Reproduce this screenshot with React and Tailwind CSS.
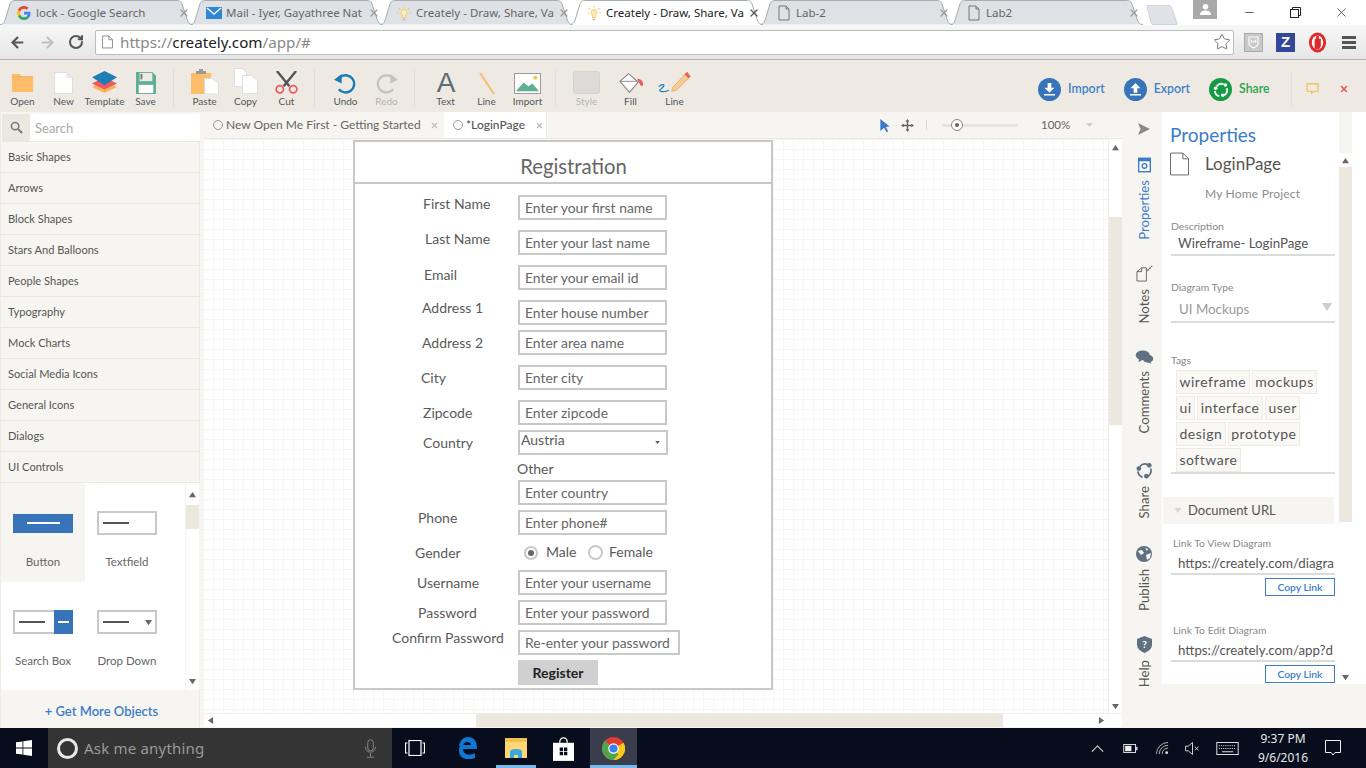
import React from 'react';
import { ArrowLeft, ArrowRight, RotateCw, Star, X, Minus } from 'lucide-react';

const chromeTabs = [
  { title: 'lock - Google Search', icon: 'google' },
  { title: 'Mail - Iyer, Gayathree Nat', icon: 'mail' },
  { title: 'Creately - Draw, Share, Va', icon: 'bulb' },
  { title: 'Creately - Draw, Share, Va', icon: 'bulb', active: true },
  { title: 'Lab-2', icon: 'doc' },
  { title: 'Lab2', icon: 'doc' },
];

const shapeGroups = ['Basic Shapes', 'Arrows', 'Block Shapes', 'Stars And Balloons', 'People Shapes', 'Typography', 'Mock Charts', 'Social Media Icons', 'General Icons', 'Dialogs', 'UI Controls'];

const formLabels = [
  { text: 'First Name', pos: 'left-[68px] top-[53px]' },
  { text: 'Last Name', pos: 'left-[70px] top-[88px]' },
  { text: 'Email', pos: 'left-[69px] top-[124px]' },
  { text: 'Address 1', pos: 'left-[67px] top-[157px]' },
  { text: 'Address 2', pos: 'left-[67px] top-[192px]' },
  { text: 'City', pos: 'left-[66px] top-[227px]' },
  { text: 'Zipcode', pos: 'left-[68px] top-[262px]' },
  { text: 'Country', pos: 'left-[68px] top-[292px]' },
  { text: 'Other', pos: 'left-[162px] top-[318px]' },
  { text: 'Phone', pos: 'left-[63px] top-[367px]' },
  { text: 'Gender', pos: 'left-[60px] top-[402px]' },
  { text: 'Male', pos: 'left-[191px] top-[401px]' },
  { text: 'Female', pos: 'left-[254px] top-[401px]' },
  { text: 'Username', pos: 'left-[62px] top-[432px]' },
  { text: 'Password', pos: 'left-[63px] top-[462px]' },
  { text: 'Confirm Password', pos: 'left-[37px] top-[487px]' },
];

const formInputs = [
  { text: 'Enter your first name', pos: 'top-[53px]' },
  { text: 'Enter your last name', pos: 'top-[88px]' },
  { text: 'Enter your email id', pos: 'top-[123px]' },
  { text: 'Enter house number', pos: 'top-[158px]' },
  { text: 'Enter area name', pos: 'top-[188px]' },
  { text: 'Enter city', pos: 'top-[223px]' },
  { text: 'Enter zipcode', pos: 'top-[258px]' },
  { text: 'Enter country', pos: 'top-[338px]' },
  { text: 'Enter phone#', pos: 'top-[368px]' },
  { text: 'Enter your username', pos: 'top-[428px]' },
  { text: 'Enter your password', pos: 'top-[458px]' },
];

const tagRows = [
  ['wireframe', 'mockups'],
  ['ui', 'interface', 'user'],
  ['design', 'prototype'],
  ['software'],
];

function TabIcon({ kind }) {
  if (kind === 'google') {
    return (
      <svg viewBox="0 0 16 16" className="w-4 h-4 shrink-0">
        <path d="M14.5 8.2c0-.5 0-1-.1-1.400H8v2.700h3.700c-.2.900-.7 1.600-1.400 2.100l2.200 1.700c1.300-1.200 2-3 2-5.100z" fill="#4285f4" />
        <path d="M8 15c1.900 0 3.500-.6 4.500-1.700l-2.200-1.700c-.6.400-1.400.7-2.300.7-1.800 0-3.300-1.200-3.800-2.800L1.900 11.200C3 13.500 5.300 15 8 15z" fill="#34a853" />
        <path d="M4.200 9.500c-.3-.9-.3-1.900 0-2.900L1.900 4.800c-1 1.900-1 4.400 0 6.400z" fill="#fbbc05" />
        <path d="M8 3.800c1 0 1.900.3 2.600 1l2-2C11.400 1.700 9.800 1 8 1 5.300 1 3 2.500 1.900 4.800l2.300 1.800C4.700 5 6.200 3.800 8 3.800z" fill="#ea4335" />
      </svg>
    );
  }
  if (kind === 'mail') {
    return (
      <svg viewBox="0 0 16 16" className="w-4 h-4 shrink-0">
        <rect y="2" width="16" height="12" fill="#2f86d6" />
        <path d="M1 3l7 6 7-6" fill="none" stroke="#fff" strokeWidth="1.400" />
      </svg>
    );
  }
  if (kind === 'bulb') {
    return (
      <svg viewBox="0 0 16 16" className="w-4 h-4 shrink-0" stroke="#f6cf6e" fill="none">
        <path d="M8 4.500a3 3 0 0 0-1.600 5.500v2.500h3.200V10A3 3 0 0 0 8 4.500z" fill="#fdeebb" />
        <path d="M8 .5v2M2.500 3l1.500 1.500M13.500 3L12 4.500M1 8h2M13 8h2" strokeWidth="1.200" />
        <path d="M6.800 14.500h2.400" stroke="#bbb" strokeWidth="1.500" />
      </svg>
    );
  }
  return (
    <svg viewBox="0 0 16 16" className="w-4 h-4 shrink-0" fill="none" stroke="#777">
      <path d="M3 1h7l3 3v11H3zM10 1v3h3" />
    </svg>
  );
}

function ChromeTab({ tab }) {
  return (
    <div className={`relative w-[193px] h-[25px] -mr-[3px] flex items-center pl-[16px] pr-[3px] ${tab.active ? 'z-10' : ''}`}>
      <svg viewBox="0 0 193 25" preserveAspectRatio="none" className="absolute inset-0 w-full h-full">
        <path
          d="M0 24.500C4 24.500 5 21 6 17L10 4C11 1.500 12 .5 16 .5H176C180 .5 181 1.500 182 4L187 19C188 22 189 24.500 193 24.500"
          fill={tab.active ? '#ffffff' : '#dee1e6'}
          stroke="#a9abae"
        />
      </svg>
      <div className="relative flex items-center w-full gap-[4px]">
        <TabIcon kind={tab.icon} />
        <span className={`flex-1 whitespace-nowrap text-[11.500px] leading-[16px] font-['Noto_Sans',sans-serif] ${tab.active ? 'text-[#222]' : 'text-[#666]'}`}>{tab.title}</span>
        <X size={12} strokeWidth={2.500} className={tab.active ? 'text-[#555] shrink-0' : 'text-[#9a9a9a] shrink-0'} />
      </div>
    </div>
  );
}

function ToolIcon({ kind }) {
  switch (kind) {
    case 'open':
      return <svg viewBox="0 0 26 22" preserveAspectRatio="none" className="w-[23px] h-[18px] mb-[2px]"><path d="M1 0h9l2 3h13v19H1z" fill="#fdbd6a" /><path d="M1 3h24v1H1z" fill="#f3a850" /></svg>;
    case 'new':
      return <svg viewBox="0 0 18 24" preserveAspectRatio="none" className="w-[19px] h-[22px]"><path d="M.5.5h11l6 6v17H.5z" fill="#fff" stroke="#ddd" /><path d="M11.500.5v6h6z" fill="#e9e9e9" /></svg>;
    case 'template':
      return (
        <svg viewBox="0 0 26 26" preserveAspectRatio="none" className="w-[25px] h-[23px]">
          <path d="M13 11L26 18 13 25 0 18z" fill="#f8b25c" />
          <path d="M13 7L26 14 13 21 0 14z" fill="#ed5a5e" />
          <path d="M13 0L26 7 13 16 0 7z" fill="#1d7eb5" />
        </svg>
      );
    case 'save':
      return (
        <svg viewBox="0 0 22 24" preserveAspectRatio="none" className="w-[20px] h-[22px]">
          <path d="M0 0h18l4 4v20H0z" fill="#5eb095" />
          <rect x="4" y="1" width="14" height="9" fill="#eeeae3" />
          <rect x="5" y="2" width="2" height="6" fill="#777" />
          <rect x="3" y="14" width="16" height="9" fill="#fff" />
        </svg>
      );
    case 'paste':
      return (
        <svg viewBox="0 0 28 25" preserveAspectRatio="none" className="w-[28px] h-[25px]">
          <path d="M0 4h20v21H0z" fill="#fdbd6a" />
          <path d="M5 2h10v3H5zM8 0h4v2H8z" fill="#9a9a9a" />
          <path d="M13.500 9.500h8l6 5v10.500h-14z" fill="#fff" stroke="#ddd" />
        </svg>
      );
    case 'copy':
      return (
        <svg viewBox="0 0 24 26" preserveAspectRatio="none" className="w-[24px] h-[26px]">
          <path d="M.5.5h8l4 4v14H.5z" fill="#fff" stroke="#ddd" />
          <path d="M8.500 7.500h9l6 5v13h-15z" fill="#fff" stroke="#ddd" />
        </svg>
      );
    case 'cut':
      return (
        <svg viewBox="0 0 26 24" className="w-[25px] h-[23px]" fill="none">
          <path d="M3 0l13 16M23 0L10 16" stroke="#555" strokeWidth="2.500" />
          <circle cx="6" cy="19" r="3.800" stroke="#ee5b5f" strokeWidth="1.800" />
          <circle cx="20" cy="19" r="3.800" stroke="#ee5b5f" strokeWidth="1.800" />
        </svg>
      );
    case 'undo':
      return (
        <svg viewBox="0 0 24 22" className="w-[23px] h-[21px]" fill="none">
          <path d="M7 4a9 9 0 1 1-2 13" stroke="#1c7cb6" strokeWidth="2.500" />
          <path d="M0 7l8-6v10z" fill="#1c7cb6" />
        </svg>
      );
    case 'redo':
      return (
        <svg viewBox="0 0 24 22" className="w-[23px] h-[21px]" fill="none">
          <path d="M17 4a9 9 0 1 0 2 13" stroke="#c4c4c0" strokeWidth="2.500" />
          <path d="M24 7l-8-6v10z" fill="#c4c4c0" />
        </svg>
      );
    case 'text':
      return (
        <svg viewBox="0 0 22 22" className="w-[22px] h-[22px]">
          <text x="11" y="20" textAnchor="middle" fontSize="28" fontFamily="'Liberation Sans', sans-serif" fill="#5f6b76">A</text>
        </svg>
      );
    case 'line':
      return <svg viewBox="0 0 16 21" className="w-[16px] h-[21px]"><path d="M1 0l14 21" stroke="#f7bb62" strokeWidth="1.800" /></svg>;
    case 'import':
      return (
        <svg viewBox="0 0 28 22" preserveAspectRatio="none" className="w-[27px] h-[21px]">
          <rect x=".5" y=".5" width="27" height="21" fill="#fff" stroke="#999" />
          <path d="M2 19l8-9 5 4 4-3 7 8z" fill="#5eb095" />
          <circle cx="22" cy="5" r="2.200" fill="#f8c24e" />
        </svg>
      );
    case 'style':
      return <div className="w-[27px] h-[23px] rounded-[3px] bg-[#dcdbd8] border border-[#d5d4d0]" />;
    case 'fill':
      return (
        <svg viewBox="0 0 28 26" preserveAspectRatio="none" className="w-[27px] h-[22px]" fill="none">
          <path d="M3 11L12 2l10 10-9 12z" stroke="#888" strokeWidth="1.200" fill="#fff" />
          <path d="M3 11h19" stroke="#888" />
          <path d="M21 8c4 0 6 3 6 7 0 2-2 2-3 0z" fill="#ef5a5d" />
        </svg>
      );
    default:
      return (
        <svg viewBox="0 0 36 26" className="w-[35px] h-[24px]" fill="none">
          <path d="M16 19L31 3l4 4-15 15-5 1z" fill="#f8cd93" stroke="#e7a968" />
          <path d="M29 5l4 4 2-2-3-5z" fill="#ef5a5d" />
          <path d="M1 18c3-3 7-3 5 0s-6 4-3 5 7 0 9-1" stroke="#1c7cb6" strokeWidth="1.300" />
        </svg>
      );
  }
}

function ToolButton({ kind, label, muted, width = 'w-[41px]' }) {
  return (
    <div className={`${width} flex flex-col items-center`}>
      <div className="h-[34px] flex items-end justify-center"><ToolIcon kind={kind} /></div>
      <span className={`text-[10px] leading-[14px] ${muted ? 'text-[#b5b5b2]' : 'text-[#555]'}`}>{label}</span>
    </div>
  );
}

function ToolSep() {
  return <div className="mx-[7px] w-px h-[38px] mt-[9px] bg-[#e4dfd6]" />;
}

function RoundAction({ bg, text, label, children }) {
  return (
    <div className="flex items-center gap-[7px]">
      <div className={`w-[23px] h-[23px] rounded-full flex items-center justify-center ${bg}`}>{children}</div>
      <span className={`text-[12.300px] font-semibold ${text}`}>{label}</span>
    </div>
  );
}

function ScrollArrow({ dir, className = '' }) {
  const d = { up: 'M4 1l4 6H0z', down: 'M4 7L0 1h8z', left: 'M1 4l6-4v8z', right: 'M7 4L1 0v8z' }[dir];
  return <svg viewBox="0 0 8 8" className={`w-[7px] h-[7px] ${className}`}><path d={d} fill="#666" /></svg>;
}

function ShapeCell({ label, active, children }) {
  return (
    <div className={`w-[84px] h-[99px] flex flex-col items-center ${active ? 'bg-[#f7f5f1]' : ''}`}>
      <div className="h-[28px] mt-[26px] flex items-center justify-center">{children}</div>
      <span className="mt-[18px] text-[11.500px] leading-[14px] text-[#666]">{label}</span>
    </div>
  );
}

function LeftPanel() {
  return (
    <div className="w-[204px] shrink-0 flex flex-col bg-[#f7f5f1] border-l border-[#efebe3]">
      <div className="h-[28px] mt-[2px] flex border-b border-[#ece8e0] mr-[4px]">
        <div className="w-[28px] ml-[1px] bg-[#ece8e0] flex items-center justify-center">
          <svg viewBox="0 0 14 14" className="w-[13px] h-[13px]" fill="none" stroke="#777" strokeWidth="1.600"><circle cx="5.500" cy="5.500" r="4" /><path d="M8.500 8.500l4.500 4.500" strokeWidth="2.200" /></svg>
        </div>
        <div className="flex-1 bg-white pl-[5px] text-[13px] leading-[29px] text-[#aaa]">Search</div>
      </div>
      <div className="mr-[4px] border-r border-[#ece8e0]">
        {shapeGroups.map((g) => (
          <div key={g} className="h-[31px] pl-[7px] border-b border-[#ece8e0] text-[11.100px] leading-[30px] text-[#555]">{g}</div>
        ))}
      </div>
      <div className="h-[207px] flex mr-[5px] bg-white">
        <div className="w-[184px] flex flex-wrap content-start">
          <ShapeCell label="Button" active>
            <div className="w-[60px] h-[19px] bg-[#3874b9] flex items-center justify-center"><div className="w-[33px] h-[2px] bg-white" /></div>
          </ShapeCell>
          <ShapeCell label="Textfield">
            <div className="w-[60px] h-[24px] border-2 border-[#c8c8c8] bg-white flex items-center pl-[4px]"><div className="w-[26px] h-[2px] bg-[#555]" /></div>
          </ShapeCell>
          <ShapeCell label="Search Box">
            <div className="w-[60px] h-[24px] border-2 border-r-0 border-[#c8c8c8] bg-white flex items-center pl-[4px]">
              <div className="w-[26px] h-[2px] bg-[#555]" />
              <div className="ml-auto w-[19px] h-[24px] bg-[#3874b9] flex items-center justify-center"><div className="w-[11px] h-[2px] bg-white" /></div>
            </div>
          </ShapeCell>
          <ShapeCell label="Drop Down">
            <div className="w-[60px] h-[24px] border-2 border-[#c8c8c8] bg-white flex items-center pl-[4px] pr-[3px]">
              <div className="w-[26px] h-[2px] bg-[#555]" />
              <ScrollArrow dir="down" className="ml-auto" />
            </div>
          </ShapeCell>
        </div>
        <div className="w-[14px] ml-auto flex flex-col items-center border-l border-[#f5f3ee]">
          <div className="h-[22px] flex items-center"><ScrollArrow dir="up" /></div>
          <div className="w-full h-[24px] bg-[#ece8e0]" />
          <div className="mt-auto h-[18px] flex items-center"><ScrollArrow dir="down" /></div>
        </div>
      </div>
      <div className="flex-1 mr-[4px] pl-[3px] border-r border-[#ece8e0] flex justify-center items-center text-[13px] font-semibold text-[#3a7ccb] pt-[6px]">+ Get More Objects</div>
    </div>
  );
}

function FormInput({ text, pos, width = 'w-[149px]' }) {
  return (
    <div className={`absolute left-[163px] ${pos} ${width} h-[25px] border-2 border-[#c8c8c8] bg-white pl-[5px] text-[13.900px] leading-[22px] text-[#666] whitespace-nowrap`}>{text}</div>
  );
}

// the registration wireframe is a free canvas, so its widgets sit at their own coordinates
function RegistrationForm() {
  return (
    <div className="absolute left-[149px] top-[1px] w-[420px] h-[550px] border-2 border-[#c8c8c8] bg-white">
      <div className="h-[42px] border-b-2 border-[#c8c8c8] text-center pl-[21px] text-[20.300px] leading-[49px] text-[#666]">Registration</div>
      {formLabels.map((l) => (
        <span key={l.text} className={`absolute ${l.pos} text-[14px] leading-[18px] text-[#5a5a5a] whitespace-nowrap`}>{l.text}</span>
      ))}
      {formInputs.map((f) => <FormInput key={f.text} text={f.text} pos={f.pos} />)}
      <div className="absolute left-[163px] top-[288px] w-[150px] h-[25px] border-2 border-[#c8c8c8] bg-white pl-[1px] text-[14px] leading-[16px] text-[#5a5a5a]">
        Austria
        <svg viewBox="0 0 6 4" className="absolute right-[6px] top-[9px] w-[5px] h-[3px]"><path d="M0 0h6L3 4z" fill="#555" /></svg>
      </div>
      <div className="absolute left-[169px] top-[404px] w-[14px] h-[14px] rounded-full border-2 border-[#c8c8c8] flex items-center justify-center"><div className="w-[6px] h-[6px] rounded-full bg-[#666]" /></div>
      <div className="absolute left-[233px] top-[403px] w-[15px] h-[15px] rounded-full border-2 border-[#c8c8c8]" />
      <FormInput text="Re-enter your password" pos="top-[488px]" width="w-[162px]" />
      <div className="absolute left-[163px] top-[518px] w-[80px] h-[25px] bg-[#d0d0d0] text-center text-[14px] leading-[25px] font-bold text-[#222]">Register</div>
    </div>
  );
}

function CanvasArea() {
  return (
    <div className="flex-1 flex flex-col min-w-0">
      <div className="h-[27px] flex bg-[#f7f5f1] border-b border-[#ece8e0]">
        <div className="w-[240px] flex items-center pl-[9px] gap-[3px] text-[12px] text-[#666]">
          <div className="w-[10px] h-[10px] rounded-full border border-[#999] shrink-0" />
          <span className="whitespace-nowrap">New Open Me First - Getting Started</span>
          <X size={9} strokeWidth={3} className="text-[#bbb] ml-[6px] shrink-0" />
        </div>
        <div className="w-[103px] bg-white flex items-center pl-[9px] gap-[3px] text-[12px] font-medium text-[#555] border-r border-[#ece8e0]">
          <div className="w-[10px] h-[10px] rounded-full border border-[#999] shrink-0" />
          <span className="whitespace-nowrap">*LoginPage</span>
          <X size={9} strokeWidth={3} className="text-[#bbb] ml-[7px] shrink-0" />
        </div>
        <div className="flex items-center ml-[333px]">
          <svg viewBox="0 0 10 14" className="w-[10px] h-[13px]"><path d="M0 0l10 8-4 .5 2.500 5-2 .5L4 9.500 0 13z" fill="#3a78c9" /></svg>
          <svg viewBox="0 0 14 14" className="w-[13px] h-[13px] ml-[11px]" fill="#666" stroke="#666"><path d="M7 1v12M1 7h12" strokeWidth="1.500" /><path d="M7 0l2 3H5zM7 14l2-3H5zM0 7l3-2v4zM14 7l-3-2v4z" strokeWidth="0" /></svg>
          <div className="w-px h-[10px] bg-[#ddd] ml-[12px]" />
          <div className="relative w-[76px] h-[3px] bg-[#e6e4e0] ml-[15px]">
            <div className="absolute left-[9px] -top-[5px] w-[12px] h-[12px] rounded-full border border-[#888] bg-white flex items-center justify-center"><div className="w-[4px] h-[4px] rounded-full bg-[#666]" /></div>
          </div>
          <span className="ml-[23px] text-[11.500px] text-[#666]">100%</span>
          <svg viewBox="0 0 8 4" className="w-[7px] h-[4px] ml-[16px]"><path d="M0 0h8L4 4z" fill="#ccc" /></svg>
        </div>
      </div>
      <div className="flex-1 flex min-h-0">
        <div className="flex-1 relative overflow-hidden bg-white bg-[linear-gradient(#f5f5f5_1px,transparent_1px),linear-gradient(90deg,#f5f5f5_1px,transparent_1px),linear-gradient(#eeeeee_1px,transparent_1px),linear-gradient(90deg,#eeeeee_1px,transparent_1px)] bg-[size:10px_10px,10px_10px,50px_50px,50px_50px] bg-[position:9px_0,9px_0,9px_0,9px_0]">
          <RegistrationForm />
        </div>
        <div className="w-[14px] flex flex-col items-center bg-white border-l border-[#f0ede6]">
          <div className="h-[78px] w-full flex justify-center pt-[5px]"><ScrollArrow dir="up" /></div>
          <div className="w-full h-[208px] bg-[#ece8e0]" />
          <div className="mt-auto h-[14px] flex items-center"><ScrollArrow dir="down" /></div>
        </div>
      </div>
      <div className="h-[14px] flex bg-white border-t border-[#f0ede6]">
        <div className="w-[272px] flex items-center pl-[3px]"><ScrollArrow dir="left" /></div>
        <div className="w-[527px] bg-[#ece8e0]" />
        <div className="w-[105px] flex items-center justify-end pr-[3px]"><ScrollArrow dir="right" /></div>
        <div className="w-[14px]" />
      </div>
      <div className="h-px bg-[#f7f5f1]" />
    </div>
  );
}

function RailItem({ label, active, gap, children }) {
  return (
    <div className={`shrink-0 flex flex-col items-center ${gap}`}>
      {children}
      <span className={`mt-[7px] [writing-mode:vertical-rl] rotate-180 text-[13.200px] leading-[16px] ${active ? 'text-[#3a7ccb]' : 'text-[#555]'}`}>{label}</span>
    </div>
  );
}

function FieldLine({ children, className = 'h-[23px]' }) {
  return (
    <div className={`border-b-2 border-[#dbdbdb] relative ${className}`}>{children}</div>
  );
}

function RightPanel() {
  return (
    <div className="w-[244px] shrink-0 flex flex-col bg-[#f7f5f1]">
      <div className="h-[572px] flex">
        <div className="w-[40px] pl-[4px] flex flex-col items-center">
          <svg viewBox="0 0 14 14" className="w-[12px] h-[12px] mt-[11px] shrink-0"><path d="M0 0l14 7-14 7 3-7z" fill="#888" /></svg>
          <RailItem label="Properties" active gap="mt-[22px]">
            <svg viewBox="0 0 14 16" className="w-[13px] h-[16px]"><rect width="14" height="16" fill="#3a7ccb" /><rect x="1.500" y="4" width="11" height="10.500" fill="#fff" /><circle cx="7" cy="9" r="2.500" fill="none" stroke="#3a7ccb" strokeWidth="1.500" /></svg>
          </RailItem>
          <RailItem label="Notes" gap="mt-[25px]">
            <svg viewBox="0 0 18 18" className="w-[17px] h-[17px]" fill="none" stroke="#666"><path d="M1 17V7l5-4h5v14z" /><path d="M1 7h5V3" /><path d="M12 6l5-5" strokeDasharray="2 1" strokeWidth="1.500" /></svg>
          </RailItem>
          <RailItem label="Comments" gap="mt-[27px]">
            <svg viewBox="0 0 20 16" className="w-[19px] h-[14px]" fill="#5f7080"><ellipse cx="8" cy="6" rx="8" ry="5.500" /><ellipse cx="14" cy="10" rx="6" ry="4.500" /><path d="M4 10l-1 4 5-3zM16 12l2 4-5-3z" /></svg>
          </RailItem>
          <RailItem label="Share" gap="mt-[28px]">
            <svg viewBox="0 0 18 18" className="w-[17px] h-[17px]" fill="#5f7080"><path d="M4 5a7 7 0 0 1 8-2.500M15.500 7a7 7 0 0 1-3 8M7 16a7 7 0 0 1-5-6" fill="none" stroke="#5f7080" strokeWidth="1.800" /><circle cx="14" cy="3.500" r="2.500" /><circle cx="3" cy="7" r="2.500" /><circle cx="11" cy="15" r="2.500" /></svg>
          </RailItem>
          <RailItem label="Publish" gap="mt-[28px]">
            <svg viewBox="0 0 16 16" className="w-[16px] h-[16px]"><circle cx="8" cy="8" r="8" fill="#5f7080" /><path d="M2 5l4-1 2 3-3 2zM10 9l5-2-1 5-3 2zM9 2l3 1-1 2z" fill="#fff" /></svg>
          </RailItem>
          <RailItem label="Help" gap="mt-[25px]">
            <svg viewBox="0 0 16 18" className="w-[15px] h-[17px]"><path d="M8 0l8 3v6c0 4-3 7-8 9-5-2-8-5-8-9V3z" fill="#5f7080" /><text x="8" y="13" textAnchor="middle" fontSize="11" fontWeight="700" fill="#fff">?</text></svg>
          </RailItem>
        </div>
        <div className="w-[177px] bg-white overflow-hidden flex flex-col">
          <div className="pl-[8px] h-[40px] text-[19px] leading-[46px] text-[#3a7ccb]">Properties</div>
          <div className="flex pl-[8px] pt-0">
            <svg viewBox="0 0 20 24" className="w-[19px] h-[24px] shrink-0" fill="none" stroke="#666"><path d="M.5.5h13l6 6v17H.5zM13.500.5v6h6" /></svg>
            <div className="ml-[16px]">
              <div className="text-[17px] leading-[24px] text-[#555]">LoginPage</div>
              <div className="mt-[9px] text-[12px] tracking-[.2px] leading-[18px] text-[#8b8b8b]">My Home Project</div>
            </div>
          </div>
          <div className="pl-[9px] mt-[16px] pr-[4px]">
            <div className="text-[10.400px] leading-[14px] text-[#888]">Description</div>
            <FieldLine><span className="absolute left-[7px] top-[1px] text-[13.300px] leading-[18px] text-[#555]">Wireframe- LoginPage</span></FieldLine>
            <div className="mt-[24px] text-[10.400px] leading-[14px] text-[#888]">Diagram Type</div>
            <FieldLine className="h-[29px]">
              <span className="absolute left-[8px] top-[6px] text-[13.300px] leading-[18px] text-[#999]">UI Mockups</span>
              <svg viewBox="0 0 10 8" className="absolute right-[3px] top-[9px] w-[10px] h-[8px]"><path d="M0 0h10L5 8z" fill="#ccc" /></svg>
            </FieldLine>
            <div className="mt-[30px] text-[10.400px] leading-[14px] text-[#888]">Tags</div>
            <div className="border-b-2 border-[#dbdbdb] pl-[5px] pt-[1px]">
              {tagRows.map((row) => (
                <div key={row[0]} className="flex gap-[2px] mt-[2px]">
                  {row.map((t) => (
                    <span key={t} className="h-[24px] px-[2.500px] bg-[#f9f8f5] border border-[#eeebe3] text-[14px] leading-[22px] tracking-[.5px] text-[#555]">{t}</span>
                  ))}
                </div>
              ))}
            </div>
          </div>
          <div className="mt-[23px] ml-[1px] mr-[5px] h-[27px] bg-[#f7f5f1] flex items-center pl-[11px]">
            <svg viewBox="0 0 8 6" className="w-[8px] h-[5px]"><path d="M0 0h8L4 6z" fill="#d9d6cd" /></svg>
            <span className="ml-[6px] text-[13px] text-[#555]">Document URL</span>
          </div>
          <div className="pl-[9px] pr-[4px]">
            <div className="pl-[2px] mt-[12px] text-[10.400px] leading-[14px] text-[#888]">Link To View Diagram</div>
            <FieldLine className="h-[25px]"><span className="absolute left-[7px] right-[1px] top-[4px] overflow-hidden whitespace-nowrap text-[13.300px] leading-[18px] text-[#555]">https://creately.com/diagra</span></FieldLine>
            <div className="ml-auto mt-[3px] w-[70px] h-[18px] border border-[#3a7ccb] text-center text-[10.300px] font-semibold leading-[16px] text-[#3a7ccb]">Copy Link</div>
            <div className="pl-[2px] mt-[27px] text-[10.400px] leading-[14px] text-[#888]">Link To Edit Diagram</div>
            <FieldLine className="h-[25px]"><span className="absolute left-[7px] right-[1px] top-[4px] overflow-hidden whitespace-nowrap text-[13.300px] leading-[18px] text-[#555]">https://creately.com/app?d</span></FieldLine>
            <div className="ml-auto mt-[3px] w-[70px] h-[18px] border border-[#3a7ccb] text-center text-[10.300px] font-semibold leading-[16px] text-[#3a7ccb]">Copy Link</div>
          </div>
        </div>
        <div className="w-[13px] mt-[41px] bg-white flex flex-col items-center">
          <div className="h-[14px] flex items-center"><ScrollArrow dir="up" /></div>
          <div className="w-full h-[355px] bg-[#ece8e0]" />
          <div className="mt-auto h-[14px] flex items-center"><ScrollArrow dir="down" /></div>
        </div>
        <div className="flex-1 bg-white" />
      </div>
    </div>
  );
}

function Taskbar() {
  return (
    <div className="h-[40px] shrink-0 flex bg-[#070d1d] relative">
      <div className="w-[48px] flex items-center justify-center">
        <svg viewBox="0 0 16 16" className="w-[16px] h-[16px]" fill="#fff"><path d="M0 2.300l6.500-.9v6.200H0zM7.300 1.300L16 0v7.600H7.300zM0 8.400h6.500v6.200L0 13.700zM7.300 8.400H16V16l-8.700-1.300z" /></svg>
      </div>
      <div className="w-[344px] bg-[#343434] flex items-center pl-[9px] pr-[16px]">
        <div className="w-[21px] h-[21px] rounded-full border-[3px] border-[#e8e8e8]" />
        <span className="ml-[6px] text-[15px] tracking-[.2px] font-['Noto_Sans',sans-serif] text-[#9a9a9a]">Ask me anything</span>
        <svg viewBox="0 0 12 20" className="ml-auto w-[11px] h-[19px]" fill="none" stroke="#8a8a8a"><rect x="3" y=".5" width="6" height="12" rx="3" /><path d="M.5 8c0 8 11 8 11 0M6 15v4M2 19.500h8" /></svg>
      </div>
      <div className="w-[46px] flex items-center justify-center">
        <svg viewBox="0 0 20 16" className="w-[20px] h-[16px]" fill="none" stroke="#fff" strokeWidth="1.200"><rect x="4" y=".5" width="12" height="15" /><path d="M2.500 3H.5v10h2M17.500 3h2v10h-2" /></svg>
      </div>
      <div className="w-[50px] ml-[4px] flex items-center justify-center">
        <svg viewBox="0 0 20 22" className="w-[20px] h-[22px]"><path d="M2 9C3 3 7 0 11 0c6 0 9 4 9 12H6c0 6 7 7 12 4v5c-7 3-16 1-16-7 0-2 0-3 1-5zM6 8h8c0-4-7-4-8 0z" fill="#0b78d4" /></svg>
      </div>
      <div className="w-[40px] ml-[4px] flex items-center justify-center border-b-[3px] border-[#76b9ed] relative pt-[3px]">
        <svg viewBox="0 0 22 22" className="w-[22px] h-[22px]"><path d="M0 1h22v20H0z" fill="#fcd774" /><path d="M0 1h22v4H0z" fill="#f0c14f" /><path d="M5 21v-6c0-2 2-3 6-3s6 1 6 3v6h-4v-3H9v3z" fill="#37a8e0" /></svg>
      </div>
      <div className="w-[54px] flex items-center justify-center">
        <svg viewBox="0 0 22 26" className="w-[21px] h-[25px]"><path d="M7 7c0-7 8-7 8 0" fill="none" stroke="#fff" strokeWidth="1.300" /><path d="M0 7h22v19H0z" fill="#fff" /><path d="M7 12h3.500v3.500H7zM11.500 12H15v3.500h-3.500zM7 16.500h3.500V20H7zM11.500 16.500H15V20h-3.500z" fill="#070d1d" /></svg>
      </div>
      <div className="w-[47px] flex items-center justify-center bg-[#3a3d4b] border-b-[3px] border-[#76b9ed] pt-[3px]">
        <svg viewBox="0 0 24 24" className="w-[23px] h-[23px]">
          <circle cx="12" cy="12" r="12" fill="#e33b2e" />
          <path d="M12 12l10.400-6A12 12 0 0 1 11 24z" fill="#fac91a" />
          <path d="M12 12L1.600 18A12 12 0 0 1 3 4z" fill="#4ca650" />
          <path d="M12 12L1.600 18A12 12 0 0 0 12 24l5-6z" fill="#4ca650" />
          <circle cx="12" cy="12" r="5.500" fill="#fff" />
          <circle cx="12" cy="12" r="4.300" fill="#3f80f0" />
        </svg>
      </div>
      <div className="ml-auto flex items-center text-white">
        <svg viewBox="0 0 14 8" className="w-[13px] h-[7px] mr-[19px]" fill="none" stroke="#ddd" strokeWidth="1.200"><path d="M.5 7.500L7 1l6.500 6.500" /></svg>
        <svg viewBox="0 0 16 10" className="w-[15px] h-[9px] mr-[18px]" fill="none" stroke="#eee"><rect x=".5" y=".5" width="13" height="9" /><rect x="2" y="2" width="7" height="6" fill="#eee" stroke="none" /><path d="M15 3v4" strokeWidth="1.500" /></svg>
        <svg viewBox="0 0 14 14" className="w-[13px] h-[13px] mr-[16px]" fill="none" stroke="#bbb"><path d="M.5 13A12.500 12.500 0 0 1 13 .5M3.500 13A9.500 9.500 0 0 1 13 3.500M6.500 13A6.500 6.500 0 0 1 13 6.500" /><circle cx="11.500" cy="11.500" r="1.500" fill="#ddd" stroke="none" /></svg>
        <svg viewBox="0 0 16 14" className="w-[15px] h-[13px] mr-[16px]" fill="none" stroke="#ddd"><path d="M.5 4.500h3L8 .5v13l-4.500-4h-3z" /><path d="M10.500 5l4 4M14.500 5l-4 4" /></svg>
        <svg viewBox="0 0 24 14" className="w-[23px] h-[13px] mr-[22px]" fill="none" stroke="#eee"><rect x=".5" y=".5" width="23" height="13" /><path d="M3 4h18M3 7h18" strokeDasharray="1 1" /><path d="M6 10.500h12" /></svg>
        <div className="w-[44px] text-center text-[12px] leading-[19px] text-[#e8e8e8] font-['Noto_Sans',sans-serif] whitespace-nowrap flex flex-col items-center"><span>9:37 PM</span><span>9/6/2016</span></div>
        <svg viewBox="0 0 16 16" className="w-[16px] h-[16px] ml-[20px] mr-[25px]" fill="none" stroke="#eee"><path d="M.5.5h15v12H10l-2 2.500L6 12.500H.5z" /></svg>
      </div>
    </div>
  );
}

export default function App() {
  return (
    <div className="w-[1366px] h-[768px] overflow-hidden flex flex-col bg-white font-['Lato',sans-serif]">
      <div className="h-[25px] shrink-0 flex items-start bg-white relative">
        {chromeTabs.map((t, i) => <ChromeTab key={i} tab={t} />)}
        <svg viewBox="0 0 32 20" className="w-[32px] h-[20px] mt-[5px] ml-[6px]"><path d="M1 .5h22c2 0 2 1 3 3l5 15c0 1 0 1-2 1H8c-2 0-2 0-3-2L1 2c0-1 0-1.500 0-1.500z" fill="#dfe2e6" stroke="#d0d3d7" /></svg>
        <div className="ml-[15px] w-[24px] h-[19px] bg-[#a9a9a9] flex items-start justify-center pt-[4px]">
          <svg viewBox="0 0 12 12" className="w-[11px] h-[11px]" fill="#fff"><circle cx="6" cy="3" r="3" /><path d="M0 12c0-4 3-5 6-5s6 1 6 5z" /></svg>
        </div>
        <div className="ml-auto mr-[2px] flex items-center h-[25px] text-[#222]">
          <div className="w-[46px] flex justify-center"><Minus size={13} strokeWidth={1.300} /></div>
          <div className="w-[46px] flex justify-center">
            <svg viewBox="0 0 11 11" className="w-[11px] h-[11px]" fill="none" stroke="#222"><path d="M2.500 2.500V.5h8v8h-2" /><rect x=".5" y="2.500" width="8" height="8" /></svg>
          </div>
          <div className="w-[46px] flex justify-center"><X size={15} strokeWidth={1.100} /></div>
        </div>
      </div>
      <div className="h-[35px] shrink-0 flex items-center bg-[linear-gradient(#f7f7f7,#e6e6e6)] border-b border-[#b5b5b5]">
        <ArrowLeft size={17} strokeWidth={3} className="ml-[9px] text-[#555]" />
        <ArrowRight size={17} strokeWidth={3} className="ml-[13px] text-[#c0c0c0]" />
        <RotateCw size={16} strokeWidth={3} className="ml-[12px] text-[#555]" />
        <div className="ml-[11px] w-[1139px] h-[25px] bg-white border border-[#bcbcbc] rounded-[2px] flex items-center pl-[6px] pr-[2px]">
          <svg viewBox="0 0 12 14" className="w-[11px] h-[14px]" fill="none" stroke="#888"><path d="M.5.5h7l4 4v9H.5zM7.500.5v4h4" /></svg>
          <span className="ml-[7px] text-[15.200px] leading-[20px] font-['Noto_Sans',sans-serif] text-[#888]">https://<span className="text-[#222]">creately.com</span>/app/#</span>
          <Star size={18} strokeWidth={1.200} className="ml-auto text-[#666]" />
        </div>
        <div className="ml-[10px] w-[19px] h-[19px] bg-[#c9c9c9] border border-[#aaa] flex items-center justify-center">
          <svg viewBox="0 0 12 14" className="w-[11px] h-[13px]" fill="none" stroke="#fff" strokeWidth="1.200"><path d="M1 1h10v7c0 2-3 4-5 5-2-1-5-3-5-5z" /><path d="M3.500 8V4L6 7l2.500-3v4" strokeWidth="1" /></svg>
        </div>
        <div className="ml-[13px] w-[19px] h-[19px] bg-[#34469a] text-white text-[15px] font-bold flex items-center justify-center font-['Liberation_Sans',sans-serif]">Z</div>
        <svg viewBox="0 0 20 22" className="ml-[13px] w-[19px] h-[21px]">
          <ellipse cx="10" cy="11" rx="9" ry="10.500" fill="#e12828" />
          <ellipse cx="10" cy="11" rx="6" ry="7.500" fill="#fff" />
          <path d="M7 18V8c0-1.500 1.500-1.500 1.500 0V5c0-1.500 3-1.500 3 0v3c0-1.500 2-1.500 2 0v7l-2 3z" fill="#e12828" />
        </svg>
        <div className="ml-[15px] flex flex-col gap-[2px]">
          <div className="w-[14px] h-[3px] bg-[#555]" /><div className="w-[14px] h-[3px] bg-[#555]" /><div className="w-[14px] h-[3px] bg-[#555]" />
        </div>
      </div>
      <div className="h-[52px] shrink-0 flex items-start bg-[#eeeae3] border-b border-[#f3e9dc] pl-[2px]">
        <ToolButton kind="open" label="Open" />
        <ToolButton kind="new" label="New" />
        <ToolButton kind="template" label="Template" />
        <ToolButton kind="save" label="Save" />
        <ToolSep />
        <div className="w-[3px]" />
        <ToolButton kind="paste" label="Paste" />
        <ToolButton kind="copy" label="Copy" />
        <ToolButton kind="cut" label="Cut" />
        <ToolSep />
        <div className="w-[3px]" />
        <ToolButton kind="undo" label="Undo" />
        <ToolButton kind="redo" label="Redo" muted />
        <ToolSep />
        <div className="w-[3px]" />
        <ToolButton kind="text" label="Text" />
        <ToolButton kind="line" label="Line" />
        <ToolButton kind="import" label="Import" />
        <ToolSep />
        <div className="w-[3px]" />
        <ToolButton kind="style" label="Style" muted />
        <div className="w-[3px]" />
        <ToolButton kind="fill" label="Fill" />
        <div className="w-[3px]" />
        <ToolButton kind="brush" label="Line" />
        <div className="ml-[343px] mt-[18px] flex items-center gap-[19px]">
          <RoundAction bg="bg-[#3874b9]" text="text-[#3f82c9]" label="Import">
            <svg viewBox="0 0 12 14" className="w-[11px] h-[13px]" fill="#fff"><path d="M4 0h4v5h3.500L6 10.500.5 5H4zM0 12h12v1.500H0z" /></svg>
          </RoundAction>
          <RoundAction bg="bg-[#3874b9]" text="text-[#3f82c9]" label="Export">
            <svg viewBox="0 0 12 14" className="w-[11px] h-[13px]" fill="#fff"><path d="M4 10.500h4v-5h3.500L6 0 .5 5.500H4zM0 12h12v1.500H0z" /></svg>
          </RoundAction>
          <RoundAction bg="bg-[#169b45]" text="text-[#2aa24f]" label="Share">
            <svg viewBox="0 0 18 18" className="w-[16px] h-[16px]" fill="#fff"><path d="M4 5a7 7 0 0 1 8-2.500M15.500 7a7 7 0 0 1-3 8M7 16a7 7 0 0 1-5-6" fill="none" stroke="#fff" strokeWidth="2" /><circle cx="14" cy="3.500" r="2" /><circle cx="3" cy="7" r="2" /><circle cx="11" cy="15" r="2" /></svg>
          </RoundAction>
        </div>
        <div className="ml-[21px] mt-[11px] w-px h-[36px] bg-[#e4dfd6]" />
        <svg viewBox="0 0 14 12" className="ml-[14px] mt-[23px] w-[13px] h-[11px]" fill="none" stroke="#f2bd4d" strokeWidth="1.300"><path d="M1 1h12v8H8l-2 2V9H1z" /></svg>
        <X size={10} strokeWidth={3.500} className="ml-[20px] mt-[24px] text-[#ee5050]" />
      </div>
      <div className="flex-1 flex min-h-0">
        <LeftPanel />
        <CanvasArea />
        <RightPanel />
      </div>
      <Taskbar />
    </div>
  );
}
